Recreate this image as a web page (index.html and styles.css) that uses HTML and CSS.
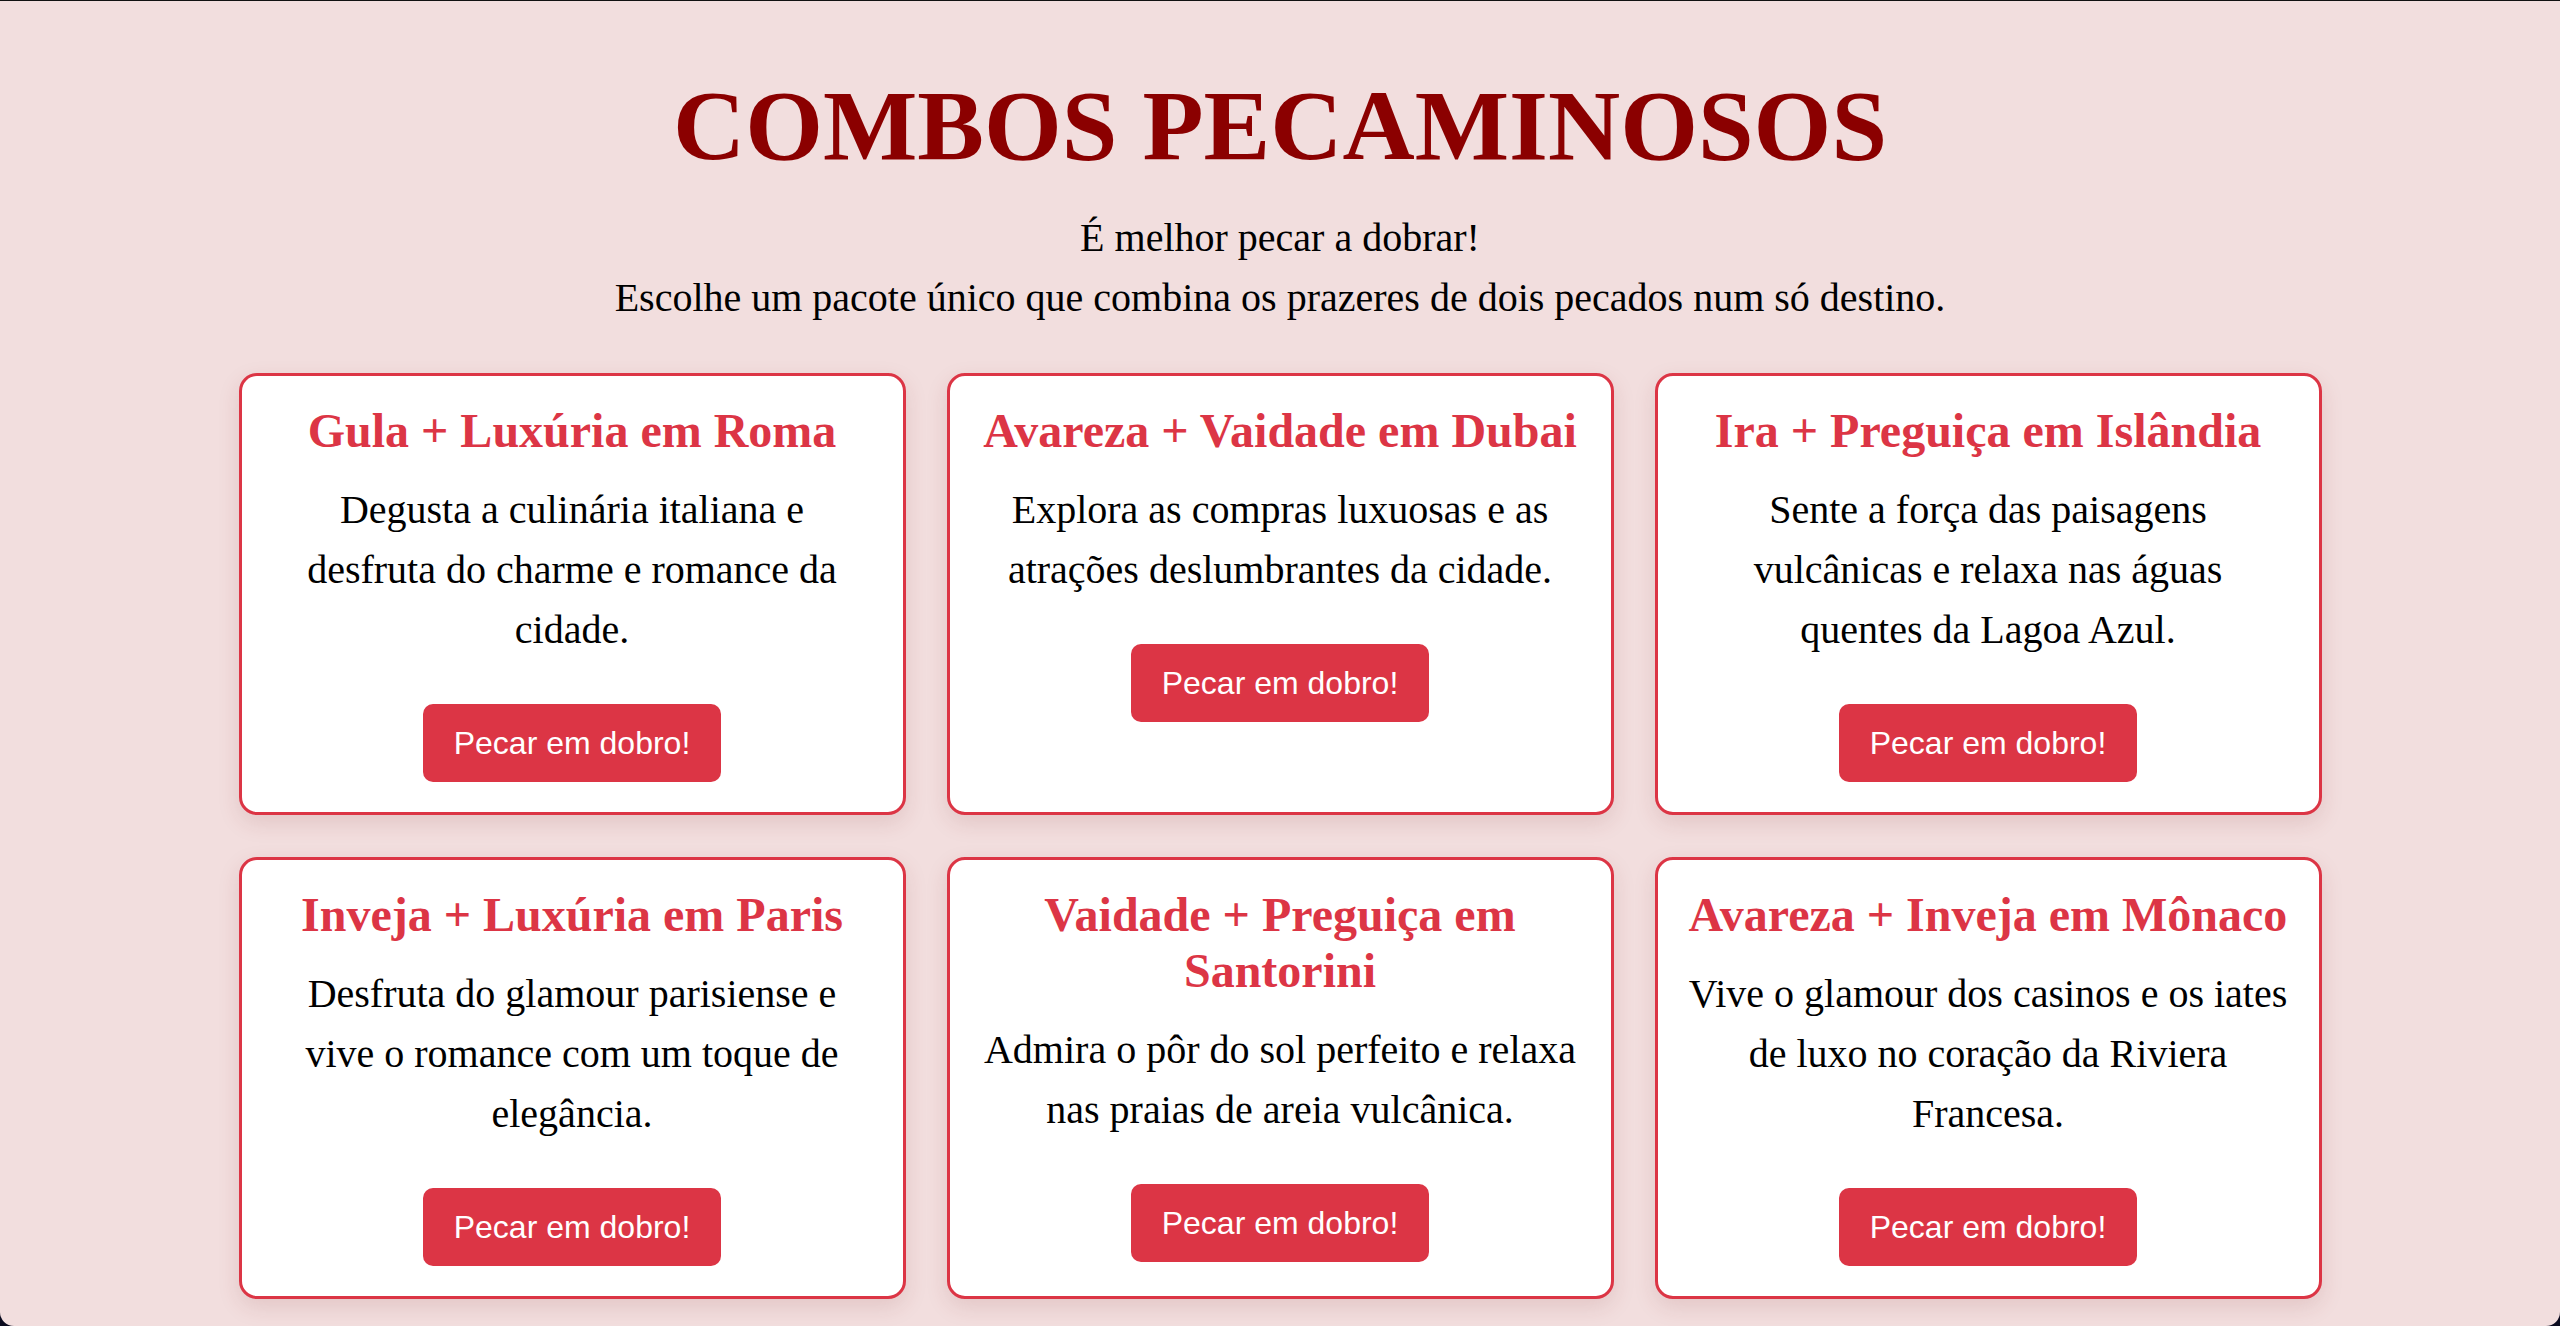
FILE: index.html
```html
<!DOCTYPE html>
<html lang="pt">
<head>
<meta charset="utf-8">
<title>Combos Pecaminosos</title>
<link rel="stylesheet" href="styles.css">
</head>
<body>
  <main class="page">
    <h1 class="page-title">COMBOS PECAMINOSOS</h1>
    <div class="intro">
      <p>É melhor pecar a dobrar!</p>
      <p>Escolhe um pacote único que combina os prazeres de dois pecados num só destino.</p>
    </div>
    <section class="combos">
      <article class="combo">
        <h2>Gula + Luxúria em Roma</h2>
        <p>Degusta a culinária italiana e desfruta do charme e romance da cidade.</p>
        <button class="btn">Pecar em dobro!</button>
      </article>
      <article class="combo">
        <h2>Avareza + Vaidade em Dubai</h2>
        <p>Explora as compras luxuosas e as atrações deslumbrantes da cidade.</p>
        <button class="btn">Pecar em dobro!</button>
      </article>
      <article class="combo">
        <h2>Ira + Preguiça em Islândia</h2>
        <p>Sente a força das paisagens vulcânicas e relaxa nas águas quentes da Lagoa Azul.</p>
        <button class="btn">Pecar em dobro!</button>
      </article>
      <article class="combo">
        <h2>Inveja + Luxúria em Paris</h2>
        <p>Desfruta do glamour parisiense e vive o romance com um toque de elegância.</p>
        <button class="btn">Pecar em dobro!</button>
      </article>
      <article class="combo">
        <h2>Vaidade + Preguiça em Santorini</h2>
        <p>Admira o pôr do sol perfeito e relaxa nas praias de areia vulcânica.</p>
        <button class="btn">Pecar em dobro!</button>
      </article>
      <article class="combo">
        <h2>Avareza + Inveja em Mônaco</h2>
        <p>Vive o glamour dos casinos e os iates de luxo no coração da Riviera Francesa.</p>
        <button class="btn">Pecar em dobro!</button>
      </article>
    </section>
  </main>
</body>
</html>
```

FILE: styles.css
```css
html {
  background: #0b0b1f;
  margin: 0;
  padding: 0;
}

body {
  margin: 0;
  min-height: 100vh;
  box-sizing: border-box;
  background: #f2dede;
  border-top: 1px solid #111;
  border-radius: 0 0 14px 14px;
  font-family: "Liberation Serif", "Times New Roman", serif;
  font-size: 40px;
  line-height: 60px;
  color: #000;
  text-align: center;
}

.page {
  display: flex;
  flex-direction: column;
  align-items: center;
}

.page-title {
  margin: 67px 0 25px;
  font-size: 100px;
  line-height: normal;
  font-weight: bold;
  color: #8b0000;
}

.intro {
  margin-bottom: 45px;
}

.intro p {
  margin: 0;
}

.combos {
  display: grid;
  grid-template-columns: repeat(3, 667px);
  column-gap: 41px;
  row-gap: 42px;
  justify-content: center;
}

.combo {
  display: flex;
  flex-direction: column;
  align-items: center;
  background: #fff;
  border: 3px solid #dc3545;
  border-radius: 18px;
  padding: 27px 31px 30px;
  box-shadow: 0 8px 22px rgba(120, 40, 40, 0.13);
}

.combo h2 {
  margin: 0 0 21px;
  font-size: 48px;
  line-height: 56px;
  font-weight: bold;
  color: #dc3545;
}

.combo p {
  margin: 0 0 44px;
}

.btn {
  font-family: "Liberation Sans", Arial, sans-serif;
  font-size: 32px;
  line-height: 38px;
  color: #fff;
  background: #dc3545;
  border: none;
  border-radius: 10px;
  padding: 20px 31px;
  cursor: pointer;
}
```
